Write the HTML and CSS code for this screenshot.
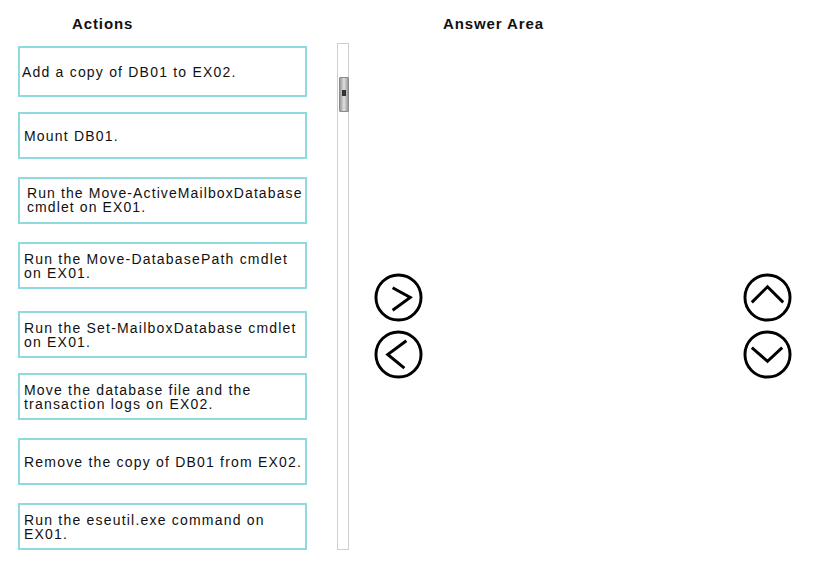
FILE: index.html
```html
<!DOCTYPE html>
<html>

<head>
    <title>Answer Area</title>

    <link rel="stylesheet" href="styles.css">
</head>

<body>

    <div class="page">

        <div class="actions">
            <h2 class="title title-actions">Actions</h2>
            <div class="list">
                <div class="item item-1">Add a copy of DB01 to EX02.</div>
                <div class="item item-2">Mount DB01.</div>
                <div class="item item-3">Run the Move-ActiveMailboxDatabase cmdlet on EX01.</div>
                <div class="item item-4">Run the Move-DatabasePath cmdlet on EX01.</div>
                <div class="item item-5">Run the Set-MailboxDatabase cmdlet on EX01.</div>
                <div class="item item-6">Move the database file and the transaction logs on EX02.</div>
                <div class="item item-7">Remove the copy of DB01 from EX02.</div>
                <div class="item item-8">Run the eseutil.exe command on EX01.</div>
            </div>
        </div>

        <div class="scrollbar">
            <div class="thumb"><span class="grip"></span></div>
        </div>

        <div class="answer">
            <h2 class="title title-answer">Answer Area</h2>
            <div class="controls">
                <div class="buttons">
                    <svg class="btn" viewBox="0 0 50 50">
                        <circle cx="25" cy="25" r="23" />
                        <polyline points="19,15 37,25 19,38" />
                    </svg>
                    <svg class="btn" viewBox="0 0 50 50">
                        <circle cx="25" cy="25" r="23" />
                        <polyline points="33,11 14,25 31,39" />
                    </svg>
                </div>
                <div class="buttons">
                    <svg class="btn" viewBox="0 0 50 50">
                        <circle cx="25" cy="25" r="23" />
                        <polyline points="9,30 25,14 41,30" />
                    </svg>
                    <svg class="btn" viewBox="0 0 50 50">
                        <circle cx="25" cy="25" r="23" />
                        <polyline points="9,18 25,32 40,18" />
                    </svg>
                </div>
            </div>
        </div>

    </div>

</body>

</html>
```

FILE: styles.css
```css
body {
    margin: 0;
    background: #fff;
    color: #111;
    font-family: "Liberation Sans", Arial, sans-serif;
}

.page {
    display: flex;
    padding-top: 15px;
}

/**
 * Headings
 */
.title {
    margin: 0;
    font-size: 15px;
    line-height: 17px;
    font-weight: bold;
    letter-spacing: 0.9px;
}

.title-actions {
    padding-left: 72px;
}

.title-answer {
    padding-left: 94px;
}

/**
 * The list of actions
 */
.actions {
    width: 337px;
}

.list {
    display: flex;
    flex-direction: column;
    gap: 18px;
    margin-top: 14px;
    padding-left: 18px;
}

.item {
    display: flex;
    align-items: center;
    box-sizing: border-box;
    width: 289px;
    height: 47px;
    padding: 0 2px 0 4px;
    border: 2px solid #8fdade;
    font-size: 14px;
    line-height: 14px;
    letter-spacing: 1.2px;
}

.item-1 {
    height: 51px;
    padding-left: 2px;
}

.item-2 {
    margin-top: -3px;
    padding-left: 4px;
}

.item-3 {
    padding: 0 0 2px 7px;
    letter-spacing: 1.1px;
}

.item-5 {
    margin-top: 4px;
}

.item-6 {
    margin-top: -3px;
}

/**
 * Fake scroll bar
 */
.scrollbar {
    position: relative;
    box-sizing: border-box;
    width: 12px;
    height: 507px;
    margin-top: 28px;
    border: 1px solid #cfcfcf;
    background: #fff;
}

.thumb {
    position: absolute;
    left: 1px;
    top: 33px;
    width: 8px;
    height: 33px;
    border: 1px solid #8a8a8a;
    border-radius: 1px;
    background: linear-gradient(to right, #9a9a9a, #e0e0e0 50%, #9a9a9a);
}

.grip {
    position: absolute;
    left: 2px;
    top: 12px;
    width: 4px;
    height: 6px;
    background: #333;
}

/**
 * Answer area and the arrow buttons
 */
.answer {
    flex: 1;
}

.controls {
    display: flex;
    justify-content: space-between;
    margin-top: 241px;
    padding: 0 29px 0 25px;
}

.buttons {
    display: flex;
    flex-direction: column;
    gap: 8px;
}

.btn {
    width: 49px;
    height: 49px;
    fill: none;
    stroke: #000;
    stroke-width: 3;
}
```
